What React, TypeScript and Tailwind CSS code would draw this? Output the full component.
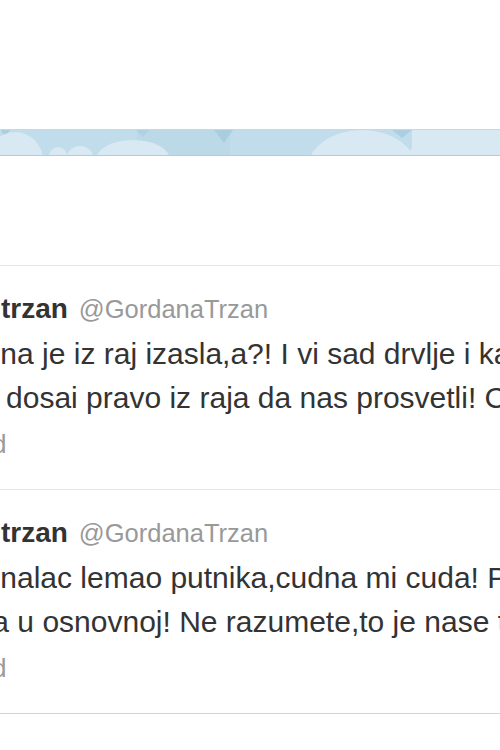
const tweets = [
  {
    lines: [
      { text: 'Ona je iz raj izasla,a?! I vi sad drvlje i kamenje', shift: 'ml-[-23px]' },
      { text: 'a dosai pravo iz raja da nas prosvetli! Covece', shift: 'ml-[-19px]' },
    ],
  },
  {
    lines: [
      { text: 'Kriminalac lemao putnika,cudna mi cuda! Pa', shift: 'ml-[-68px]' },
      { text: 'skola u osnovnoj! Ne razumete,to je nase tu', shift: 'ml-[-61px]' },
    ],
  },
];

function Clouds() {
  return (
    <svg width="500" height="25" viewBox="0 0 500 25" className="block">
      <rect x="0" y="0" width="500" height="25" fill="#c1dcea" />
      <rect x="137" y="0" width="93" height="25" fill="#bcd9e8" />
      {/* dark gaps between clouds */}
      <polygon points="1,0 10,0 5,8" fill="#abcfe2" />
      <polygon points="136,0 149,0 143,7" fill="#afd1e3" />
      <polygon points="214,0 233,0 224,13" fill="#a9cde0" />
      <polygon points="392,0 412,0 402,8" fill="#abcfe2" />
      {/* light clouds */}
      <g fill="#d8e9f3">
        <circle cx="15" cy="30" r="28" />
        <circle cx="58" cy="26" r="9" />
        <circle cx="80" cy="30" r="14" />
        <ellipse cx="133" cy="30" rx="37" ry="20" />
        <ellipse cx="362" cy="40" rx="55" ry="40" />
        <ellipse cx="470" cy="30" rx="62" ry="34" />
        <rect x="412" y="0" width="88" height="25" />
      </g>
    </svg>
  );
}

export default function App() {
  return (
    <div className="w-[500px] h-[750px] bg-white overflow-hidden font-['Liberation_Sans',Arial,sans-serif] text-[#333]">
      {/* Header banner */}
      <div className="h-[129px]" />
      <div className="h-[27px] border-t border-b border-t-[#c8d7e0] border-b-[#b7cbd6] overflow-hidden">
        <Clouds />
      </div>
      <div className="h-[109px]" />

      {/* Tweets */}
      {tweets.map((tweet, i) => (
        <div key={i} className="h-[224px] border-t border-[#e6e6e6] overflow-hidden">
          <div className="pt-[26px]">
            <div className="ml-[-122px] whitespace-nowrap text-[28px] leading-[34px]">
              <span className="font-bold text-[#333]">Gordana trzan</span>
              <span className="ml-[11px] text-[25.5px] text-[#999]">@GordanaTrzan</span>
            </div>
            <div className="mt-[6px] text-[30px] leading-[44px] text-[#333]">
              {tweet.lines.map((line) => (
                <div key={line.text} className={`whitespace-nowrap ${line.shift}`}>
                  {line.text}
                </div>
              ))}
            </div>
            <div className="mt-[4px] ml-[-80px] whitespace-nowrap text-[25.5px] leading-[40px] text-[#999]">
              Expand
            </div>
          </div>
        </div>
      ))}
      <div className="border-t border-[#d4d4d4]" />
    </div>
  );
}
